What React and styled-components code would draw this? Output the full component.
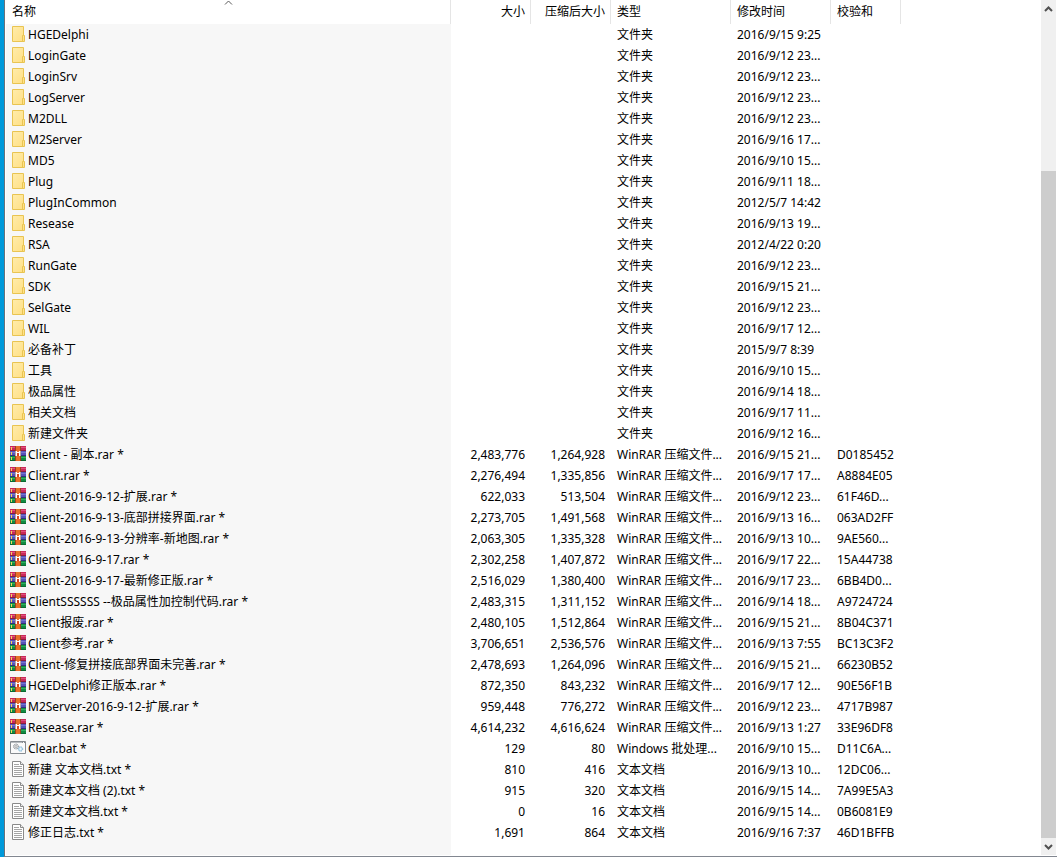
import React from 'react';
import styled, { createGlobalStyle } from 'styled-components';

const folders = [
	['HGEDelphi', '2016/9/15 9:25'],
	['LoginGate', '2016/9/12 23...'],
	['LoginSrv', '2016/9/12 23...'],
	['LogServer', '2016/9/12 23...'],
	['M2DLL', '2016/9/12 23...'],
	['M2Server', '2016/9/16 17...'],
	['MD5', '2016/9/10 15...'],
	['Plug', '2016/9/11 18...'],
	['PlugInCommon', '2012/5/7 14:42'],
	['Resease', '2016/9/13 19...'],
	['RSA', '2012/4/22 0:20'],
	['RunGate', '2016/9/12 23...'],
	['SDK', '2016/9/15 21...'],
	['SelGate', '2016/9/12 23...'],
	['WIL', '2016/9/17 12...'],
	['必备补丁', '2015/9/7 8:39'],
	['工具', '2016/9/10 15...'],
	['极品属性', '2016/9/14 18...'],
	['相关文档', '2016/9/17 11...'],
	['新建文件夹', '2016/9/12 16...'],
];

// kind, name, size, packed size, modified, checksum
const files = [
	['rar', 'Client - 副本.rar', '2,483,776', '1,264,928', '2016/9/15 21...', 'D0185452'],
	['rar', 'Client.rar', '2,276,494', '1,335,856', '2016/9/17 17...', 'A8884E05'],
	['rar', 'Client-2016-9-12-扩展.rar', '622,033', '513,504', '2016/9/12 23...', '61F46D...'],
	['rar', 'Client-2016-9-13-底部拼接界面.rar', '2,273,705', '1,491,568', '2016/9/13 16...', '063AD2FF'],
	['rar', 'Client-2016-9-13-分辨率-新地图.rar', '2,063,305', '1,335,328', '2016/9/13 10...', '9AE560...'],
	['rar', 'Client-2016-9-17.rar', '2,302,258', '1,407,872', '2016/9/17 22...', '15A44738'],
	['rar', 'Client-2016-9-17-最新修正版.rar', '2,516,029', '1,380,400', '2016/9/17 23...', '6BB4D0...'],
	['rar', 'ClientSSSSSS --极品属性加控制代码.rar', '2,483,315', '1,311,152', '2016/9/14 18...', 'A9724724'],
	['rar', 'Client报废.rar', '2,480,105', '1,512,864', '2016/9/15 21...', '8B04C371'],
	['rar', 'Client参考.rar', '3,706,651', '2,536,576', '2016/9/13 7:55', 'BC13C3F2'],
	['rar', 'Client-修复拼接底部界面未完善.rar', '2,478,693', '1,264,096', '2016/9/15 21...', '66230B52'],
	['rar', 'HGEDelphi修正版本.rar', '872,350', '843,232', '2016/9/17 12...', '90E56F1B'],
	['rar', 'M2Server-2016-9-12-扩展.rar', '959,448', '776,272', '2016/9/12 23...', '4717B987'],
	['rar', 'Resease.rar', '4,614,232', '4,616,624', '2016/9/13 1:27', '33E96DF8'],
	['bat', 'Clear.bat', '129', '80', '2016/9/10 15...', 'D11C6A...'],
	['txt', '新建 文本文档.txt', '810', '416', '2016/9/13 10...', '12DC06...'],
	['txt', '新建文本文档 (2).txt', '915', '320', '2016/9/15 14...', '7A99E5A3'],
	['txt', '新建文本文档.txt', '0', '16', '2016/9/15 14...', '0B6081E9'],
	['txt', '修正日志.txt', '1,691', '864', '2016/9/16 7:37', '46D1BFFB'],
];

const typeNames = {
	folder: '文件夹',
	rar: 'WinRAR 压缩文件...',
	bat: 'Windows 批处理...',
	txt: '文本文档',
};

const rows = [
	...folders.map(([name, modified]) => ({ kind: 'folder', name, modified })),
	...files.map(([kind, name, size, packed, modified, checksum]) => ({
		kind,
		name: `${name} *`,
		size,
		packed,
		modified,
		checksum,
	})),
];

const FolderIcon = () => (
	<Icon viewBox='0 0 16 16' aria-hidden='true'>
		<defs>
			<linearGradient id='folder' x1='0' y1='0' x2='1' y2='1'>
				<stop offset='0' stopColor='#ffecab' />
				<stop offset='1' stopColor='#ffdf83' />
			</linearGradient>
		</defs>
		<path d='M2.5.5h11v9h1v6h-12z' fill='url(#folder)' stroke='#e9c451' />
		<path d='M12.5 15V9.5h1' fill='none' stroke='#e9c451' />
	</Icon>
);

const RarIcon = () => (
	<Icon viewBox='0 0 16 16' shapeRendering='crispEdges' aria-hidden='true'>
		<path d='M0 0h16v5H0z' fill='#c9285a' />
		<path d='M0 1h16v1H0z' fill='#e0527c' />
		<path d='M0 4h16v1H0z' fill='#8c1c3c' />
		<path d='M0 5h16v5H0z' fill='#5553b8' />
		<path d='M0 6h16v1H0z' fill='#7674d0' />
		<path d='M0 9h16v1H0z' fill='#33317c' />
		<path d='M0 10h16v5H0z' fill='#128a41' />
		<path d='M0 11h16v1H0z' fill='#2fae5e' />
		<path d='M0 14h16v1H0z' fill='#0a6a30' />
		<path d='M1 1h1v3H1zM1 6h1v3H1zM1 11h1v3H1z' fill='#f4d75b' />
		<path d='M6 0h4v15H6z' fill='#e8702a' />
		<path d='M5 0h1v15H5zM10 0h1v15h-1z' fill='#9a4420' />
		<path d='M5 5h6v5H5z' fill='#b9a8a6' />
		<path d='M6 5h4v5H6z' fill='#fff' />
		<path d='M7 7h2v3H7z' fill='#d8441e' />
		<path d='M7 5h2v1H7z' fill='#e8702a' />
	</Icon>
);

const BatIcon = () => (
	<Icon viewBox='0 0 16 16' aria-hidden='true'>
		<path d='M.5 1.5h15v12H.5z' fill='#fafafa' stroke='#868b90' />
		<path d='M1 2.5h11' stroke='#b8bcc0' />
		<path d='M12 2h1v1h-1zm2 0h1v1h-1z' fill='#868b90' />
		<circle cx='6' cy='6.5' r='2.5' fill='#dcdee0' stroke='#858a8f' strokeDasharray='1 .6' />
		<circle cx='6' cy='6.5' r='1' fill='#fff' stroke='#888' strokeWidth='.6' />
		<circle cx='10.5' cy='9' r='2.2' fill='#c6e2f2' stroke='#76add0' strokeDasharray='1 .6' />
		<circle cx='10.5' cy='9' r='.7' fill='#fff' />
	</Icon>
);

const TextIcon = () => (
	<Icon viewBox='0 0 16 16' aria-hidden='true'>
		<path d='M2.5.5h8l3 3v12h-11z' fill='#fff' stroke='#8a8a8a' />
		<path d='M10.5.5v3h3' fill='#eee' stroke='#8a8a8a' />
		<path d='M4 3.5h5M4 5.5h8M4 7.5h8M4 9.5h8M4 11.5h8M4 13.5h8' stroke='#a5a5a5' />
	</Icon>
);

const icons = {
	folder: FolderIcon,
	rar: RarIcon,
	bat: BatIcon,
	txt: TextIcon,
};

const FileRow = ({ row }) => {
	const KindIcon = icons[row.kind];

	return (
		<tr>
			<Cell>
				<NameLabel>
					<KindIcon />
					{row.name}
				</NameLabel>
			</Cell>
			<Cell $right>{row.size}</Cell>
			<Cell $right>{row.packed}</Cell>
			<Cell>{typeNames[row.kind]}</Cell>
			<Cell>{row.modified}</Cell>
			<Cell>{row.checksum}</Cell>
			<Cell />
		</tr>
	);
};

const App = () => (
	<>
		<GlobalStyle />
		<Desktop>
			<ListPane>
				<ListArea>
					<Table>
						<colgroup>
							<Column $width={445} />
							<Column $width={80} />
							<Column $width={80} />
							<Column $width={120} />
							<Column $width={100} />
							<Column $width={70} />
							<col />
						</colgroup>
						<thead>
							<tr>
								<HeaderCell aria-sort='ascending'>
									名称
									<SortArrow viewBox='0 0 9 5' aria-hidden='true'>
										<path d='M1 4.5l3.5-3.5L8 4.5' />
									</SortArrow>
								</HeaderCell>
								<HeaderCell $right>大小</HeaderCell>
								<HeaderCell $right>压缩后大小</HeaderCell>
								<HeaderCell>类型</HeaderCell>
								<HeaderCell>修改时间</HeaderCell>
								<HeaderCell>校验和</HeaderCell>
								<EmptyHeader />
							</tr>
						</thead>
						<tbody>
							{rows.map((row) => (
								<FileRow key={row.name} row={row} />
							))}
						</tbody>
					</Table>
				</ListArea>
				<ScrollBar>
					<ScrollButton type='button' aria-label='Scroll up'>
						<ScrollArrow viewBox='0 0 9 6' aria-hidden='true'>
							<path d='M1 5l3.5-3.5L8 5' />
						</ScrollArrow>
					</ScrollButton>
					<ScrollSpace />
					<ScrollThumb />
					<ScrollButton type='button' aria-label='Scroll down'>
						<ScrollArrow viewBox='0 0 9 6' aria-hidden='true'>
							<path d='M1 1l3.5 3.5L8 1' />
						</ScrollArrow>
					</ScrollButton>
				</ScrollBar>
			</ListPane>
		</Desktop>
	</>
);

const GlobalStyle = createGlobalStyle`
	* {
		box-sizing: border-box;
	}
	body {
		margin: 0;
		background: #fff;
		color: #000;
		font-family: 'Noto Sans', 'Noto Sans CJK SC', sans-serif;
		font-size: 12px;
	}
`;

const Desktop = styled.div`
	display: flex;
	min-height: 100vh;
	padding-left: 4px;
	background: #0099da;
`;

const ListPane = styled.main`
	display: flex;
	flex: 1;
	min-width: 0;
	padding: 0 1px 1px;
	background: #fff;
	border-left: 1px solid #69727b;
	border-bottom: 1px solid #828790;
`;

const ListArea = styled.div`
	flex: 1;
	min-width: 0;
	overflow: hidden;
	background: linear-gradient(to right, #f7f7f7 445px, #fff 445px);
`;

const Table = styled.table`
	width: 100%;
	table-layout: fixed;
	border-collapse: separate;
	border-spacing: 0;
`;

const Column = styled.col`
	width: ${({ $width }) => $width}px;
`;

const HeaderCell = styled.th`
	position: relative;
	height: 24px;
	padding: 0 5px 0 ${({ $right }) => ($right ? 0 : 6)}px;
	background: #fff;
	border-right: 1px solid #e5e5e5;
	font-weight: 400;
	line-height: 20px;
	text-align: ${({ $right }) => ($right ? 'right' : 'left')};
	white-space: nowrap;
`;

const EmptyHeader = styled.td`
	background: #fff;
`;

const SortArrow = styled.svg`
	position: absolute;
	top: 0;
	left: 50%;
	width: 9px;
	height: 5px;
	margin-left: -4px;
	fill: none;
	stroke: #5a5a5a;
`;

const Cell = styled.td`
	height: 21px;
	padding: 0 6px;
	line-height: 20px;
	text-align: ${({ $right }) => ($right ? 'right' : 'left')};
	white-space: nowrap;
	overflow: hidden;

	&:first-child {
		padding-left: 4px;
	}
`;

const NameLabel = styled.span`
	display: flex;
	align-items: center;
	gap: 2px;
`;

const Icon = styled.svg`
	flex: none;
	width: 16px;
	height: 16px;
	margin-bottom: 2px;
`;

const ScrollBar = styled.div`
	display: flex;
	flex-direction: column;
	width: 15px;
	background: #f0f0f0;
`;

const ScrollButton = styled.button`
	display: flex;
	align-items: center;
	justify-content: center;
	height: 17px;
	padding: 0;
	background: #f0f0f0;
	border: 0;
`;

const ScrollArrow = styled.svg`
	width: 9px;
	height: 6px;
	fill: none;
	stroke: #505050;
	stroke-width: 2;
`;

const ScrollSpace = styled.div`
	flex: 154;
`;

const ScrollThumb = styled.div`
	flex: 667;
	background: #cdcdcd;
`;

export default App;
